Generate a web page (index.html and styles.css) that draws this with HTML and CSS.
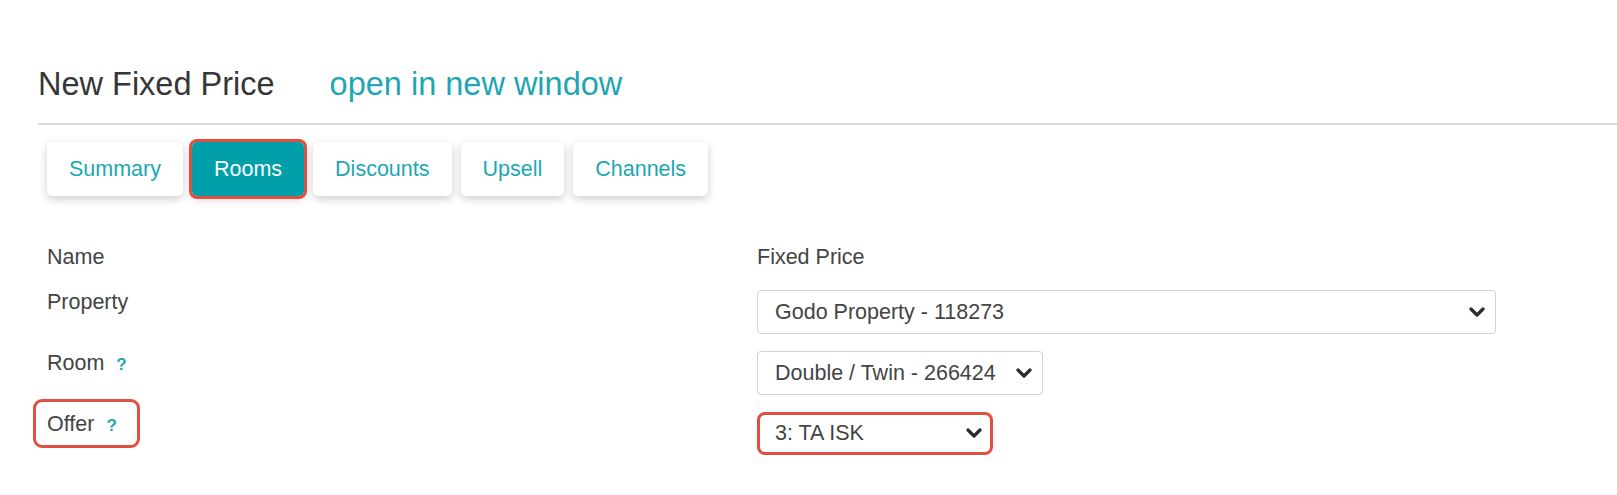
FILE: index.html
```html
<!DOCTYPE html>
<html lang="en">
<head>
<meta charset="utf-8">
<title>New Fixed Price</title>
<link rel="stylesheet" href="styles.css">
</head>
<body>
<div class="page">
  <div class="header">
    <h1 class="title">New Fixed Price</h1>
    <a class="new-window" href="#">open in new window</a>
  </div>
  <div class="divider"></div>
  <nav class="tabs">
    <a class="tab" href="#">Summary</a>
    <a class="tab active" href="#">Rooms</a>
    <a class="tab" href="#">Discounts</a>
    <a class="tab" href="#">Upsell</a>
    <a class="tab" href="#">Channels</a>
  </nav>
  <div class="form">
    <div class="label row-name">Name</div>
    <div class="value row-name">Fixed Price</div>

    <div class="label">Property</div>
    <div class="value">
      <div class="select select-property">
        <span>Godo Property - 118273</span>
        <svg class="chev" width="16" height="11" viewBox="0 0 16 11"><path d="M2 2 L8 8 L14 2" fill="none" stroke="#2b2b2b" stroke-width="3.2" stroke-linecap="round" stroke-linejoin="round"/></svg>
      </div>
    </div>

    <div class="label">Room <span class="help">?</span></div>
    <div class="value">
      <div class="select select-room">
        <span>Double / Twin - 266424</span>
        <svg class="chev" width="16" height="11" viewBox="0 0 16 11"><path d="M2 2 L8 8 L14 2" fill="none" stroke="#2b2b2b" stroke-width="3.2" stroke-linecap="round" stroke-linejoin="round"/></svg>
      </div>
    </div>

    <div class="label"><span class="marked-label">Offer <span class="help">?</span></span></div>
    <div class="value">
      <div class="select select-offer marked">
        <span>3: TA ISK</span>
        <svg class="chev" width="16" height="11" viewBox="0 0 16 11"><path d="M2 2 L8 8 L14 2" fill="none" stroke="#2b2b2b" stroke-width="3.2" stroke-linecap="round" stroke-linejoin="round"/></svg>
      </div>
    </div>
  </div>
</div>
</body>
</html>
```

FILE: styles.css
```css
* { box-sizing: border-box; }

html, body {
  margin: 0;
  padding: 0;
  background: #ffffff;
}

body {
  font-family: "Liberation Sans", Arial, sans-serif;
  color: #444444;
}

.page {
  padding-left: 38px;
}

.header {
  padding-top: 65px;
  display: flex;
  align-items: baseline;
  gap: 55px;
}

.title {
  margin: 0;
  font-size: 32.5px;
  line-height: 38px;
  font-weight: normal;
  color: #363636;
}

.new-window {
  font-size: 32.5px;
  line-height: 38px;
  color: #1fa6b3;
  text-decoration: none;
}

.divider {
  margin-top: 20px;
  height: 2px;
  background: #dcdcdc;
}

.tabs {
  margin-top: 17px;
  margin-left: 9px;
  display: flex;
  gap: 9px;
}

.tab {
  height: 54px;
  padding: 0 22px;
  display: flex;
  align-items: center;
  font-size: 21.5px;
  color: #20a7b3;
  text-decoration: none;
  background: #ffffff;
  border-radius: 5px;
  box-shadow: 0 3px 8px rgba(0, 0, 0, 0.2);
}

.tab.active {
  background: #009fa9;
  color: #ffffff;
  outline: 3px solid #e0503e;
  outline-offset: 0;
}

.form {
  margin-top: 49px;
  margin-left: 9px;
  display: grid;
  grid-template-columns: 710px 1fr;
  row-gap: 17px;
  font-size: 21.5px;
  line-height: 25px;
}

.row-name {
  padding-bottom: 3px;
}

.label {
  color: #444444;
}

.value {
  color: #444444;
}

.help {
  margin-left: 6px;
  color: #1fa6b3;
  font-weight: bold;
  font-size: 17px;
}

.marked-label {
  display: inline-block;
  border: 3px solid #e0503e;
  border-radius: 9px;
  padding: 10px 20px 7px 11px;
  margin: -13px 0 0 -14px;
}

.select {
  height: 44px;
  border: 1px solid #cfd4da;
  border-radius: 4px;
  padding: 0 10px 0 17px;
  display: flex;
  align-items: center;
  justify-content: space-between;
  color: #444444;
  background: #ffffff;
}

.select-property { width: 739px; }
.select-room { width: 286px; }
.select-offer { width: 236px; }

.select.marked {
  border: 3px solid #e0503e;
  border-radius: 8px;
  padding-left: 15px;
  padding-right: 8px;
  height: 43px;
}

.chev {
  flex: none;
}
```
